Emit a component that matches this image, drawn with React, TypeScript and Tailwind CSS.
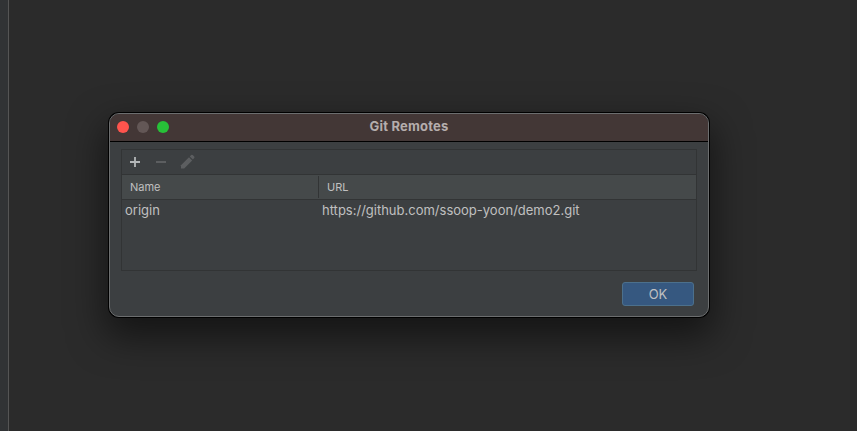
import React from "react";

function Toolbar() {
  return (
    <div className="box-content flex h-6 items-center border-b border-[#323435]">
      <svg width="76" height="24" viewBox="0 0 76 24" fill="none" aria-hidden="true">
        <path d="M8 12H18M13 7V17" stroke="#b4b7b9" strokeWidth="1.8" />
        <path d="M34 12H44" stroke="#5c5e60" strokeWidth="1.8" />
        <path d="M59 15.3L67 7.3L70.2 10.5L62.2 18.5H59Z" fill="#5c5e60" />
        <path d="M67.8 6.5L69.2 5.1Q69.9 4.5 70.7 5.1L72.2 6.6Q72.8 7.4 72.2 8.1L70.9 9.5Z" fill="#5c5e60" />
      </svg>
    </div>
  );
}

function RemotesTable() {
  return (
    <div className="h-[122px] border border-[#323435] text-[#c0c0c0]">
      <Toolbar />
      <div className="flex h-[25px] items-center border-b border-[#323435] bg-[#45494a] text-[11px]">
        <div className="w-[196px] pl-2">Name</div>
        <div className="flex h-[22px] items-center border-l border-[#323435] pl-2">URL</div>
      </div>
      <div className="flex h-5 items-center text-[13px] leading-5">
        <div className="w-[197px] pl-[3px]">origin</div>
        <div className="pl-[3px]">https://github.com/ssoop-yoon/demo2.git</div>
      </div>
    </div>
  );
}

export default function App() {
  return (
    <div className="flex h-[431px] w-[857px] overflow-hidden bg-[#2b2b2b] font-['Inter','Liberation_Sans',sans-serif]">
      <div className="w-[9px] shrink-0 border-r border-[#555555] bg-[#313335]" />
      <main className="grow pl-[100px] pt-[113px]">
        <section className="h-[204px] w-[600px] overflow-hidden rounded-[10px] border border-[#6c6e6f] bg-[#3c3f41] shadow-[0_0_0_1px_#000,0_16px_36px_4px_rgba(0,0,0,0.52)]">
          <header className="grid h-7 grid-cols-[1fr_auto_1fr] items-center border-b border-black bg-[#433736] pb-px">
            <div className="flex gap-2 pl-[7px]">
              <span className="size-3 rounded-full bg-[#ff544d]" />
              <span className="size-3 rounded-full bg-[#635756]" />
              <span className="size-3 rounded-full bg-[#27c138]" />
            </div>
            <h1 className="pb-0.5 text-[13px] leading-5 font-bold tracking-[0.22px] text-[#b5aead]">Git Remotes</h1>
          </header>
          <div className="px-[11px] pt-[7px]">
            <RemotesTable />
            <div className="flex justify-end pr-[3px] pt-[11px]">
              <button className="h-6 w-[72px] rounded-[3px] border border-[#4c708c] bg-[#365880] text-[13px] leading-5 text-[#c0c0c0]">OK</button>
            </div>
          </div>
        </section>
      </main>
    </div>
  );
}
